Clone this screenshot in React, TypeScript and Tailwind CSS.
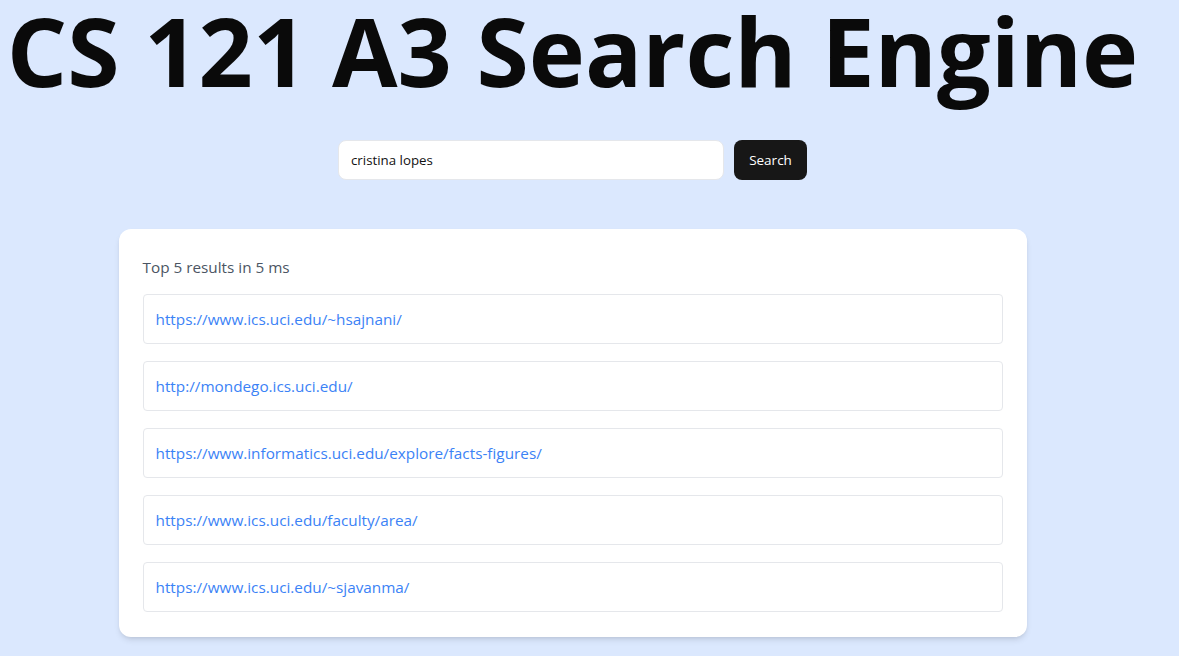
import { useState } from "react";

const results = [
  "https://www.ics.uci.edu/~hsajnani/",
  "http://mondego.ics.uci.edu/",
  "https://www.informatics.uci.edu/explore/facts-figures/",
  "https://www.ics.uci.edu/faculty/area/",
  "https://www.ics.uci.edu/~sjavanma/",
];

export default function App() {
  const [query, setQuery] = useState("cristina lopes");

  return (
    <div className="min-h-screen bg-[#dbe8fe] font-['Open_Sans',sans-serif] text-[#0a0a0a]">
      <div className="mx-auto flex w-[1145px] -translate-x-[17px] flex-col items-center">
        <h1 className="whitespace-nowrap text-[95px] leading-[100px] font-bold">
          CS 121 A3 Search Engine
        </h1>
        <form
          className="mt-[40px] flex items-center gap-[10px]"
          onSubmit={(e) => e.preventDefault()}
        >
          <input
            value={query}
            onChange={(e) => setQuery(e.target.value)}
            className="h-10 w-[386px] rounded-lg border border-[#e5e7eb] bg-white px-3 text-[13.3px] text-[#111] outline-none"
          />
          <button
            type="submit"
            className="h-10 w-[73px] rounded-lg bg-[#171717] text-[13.5px] text-white"
          >
            Search
          </button>
        </form>
        <div className="mt-[49px] w-[908px] rounded-xl bg-white px-6 pt-[26px] pb-[25px] shadow-md">
          <p className="mb-[15px] text-[15.3px] leading-6 text-[#4b5563]">Top 5 results in 5 ms</p>
          <ul className="flex flex-col gap-[17px]">
            {results.map((url) => (
              <li key={url} className="rounded border border-[#e5e7eb] px-3 py-3">
                <a href={url} className="text-[15.3px] leading-6 text-[#3b82f6]">
                  {url}
                </a>
              </li>
            ))}
          </ul>
        </div>
      </div>
    </div>
  );
}
